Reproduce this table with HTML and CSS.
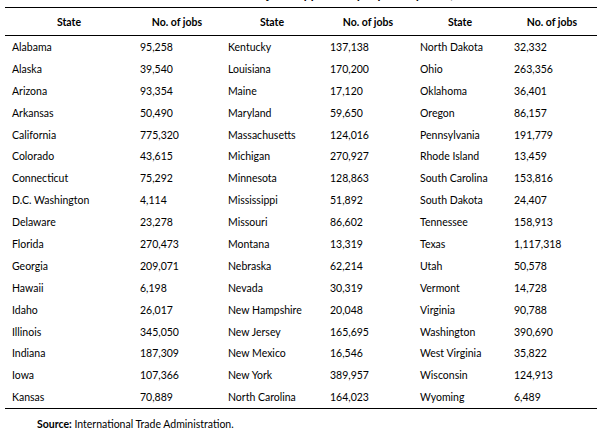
FILE: index.html
```html
<!DOCTYPE html>
<html lang="en">
<head>
<meta charset="utf-8">
<title>Jobs supported by exports by state</title>
<link rel="stylesheet" href="styles.css">
</head>
<body>
<div class="page">
  <p class="title">Table 2. Number of jobs supported by exports by state, 2015</p>
  <table class="jobs">
    <colgroup>
      <col class="c1"><col class="c2"><col class="c3"><col class="c4"><col class="c5"><col class="c6">
    </colgroup>
    <thead>
      <tr><th>State</th><th>No. of jobs</th><th>State</th><th>No. of jobs</th><th>State</th><th>No. of jobs</th></tr>
    </thead>
    <tbody>
      <tr><td>Alabama</td><td>95,258</td><td>Kentucky</td><td>137,138</td><td>North Dakota</td><td>32,332</td></tr>
      <tr><td>Alaska</td><td>39,540</td><td>Louisiana</td><td>170,200</td><td>Ohio</td><td>263,356</td></tr>
      <tr><td>Arizona</td><td>93,354</td><td>Maine</td><td>17,120</td><td>Oklahoma</td><td>36,401</td></tr>
      <tr><td>Arkansas</td><td>50,490</td><td>Maryland</td><td>59,650</td><td>Oregon</td><td>86,157</td></tr>
      <tr><td>California</td><td>775,320</td><td>Massachusetts</td><td>124,016</td><td>Pennsylvania</td><td>191,779</td></tr>
      <tr><td>Colorado</td><td>43,615</td><td>Michigan</td><td>270,927</td><td>Rhode Island</td><td>13,459</td></tr>
      <tr><td>Connecticut</td><td>75,292</td><td>Minnesota</td><td>128,863</td><td>South Carolina</td><td>153,816</td></tr>
      <tr><td>D.C. Washington</td><td>4,114</td><td>Mississippi</td><td>51,892</td><td>South Dakota</td><td>24,407</td></tr>
      <tr><td>Delaware</td><td>23,278</td><td>Missouri</td><td>86,602</td><td>Tennessee</td><td>158,913</td></tr>
      <tr><td>Florida</td><td>270,473</td><td>Montana</td><td>13,319</td><td>Texas</td><td>1,117,318</td></tr>
      <tr><td>Georgia</td><td>209,071</td><td>Nebraska</td><td>62,214</td><td>Utah</td><td>50,578</td></tr>
      <tr><td>Hawaii</td><td>6,198</td><td>Nevada</td><td>30,319</td><td>Vermont</td><td>14,728</td></tr>
      <tr><td>Idaho</td><td>26,017</td><td>New Hampshire</td><td>20,048</td><td>Virginia</td><td>90,788</td></tr>
      <tr><td>Illinois</td><td>345,050</td><td>New Jersey</td><td>165,695</td><td>Washington</td><td>390,690</td></tr>
      <tr><td>Indiana</td><td>187,309</td><td>New Mexico</td><td>16,546</td><td>West Virginia</td><td>35,822</td></tr>
      <tr><td>Iowa</td><td>107,366</td><td>New York</td><td>389,957</td><td>Wisconsin</td><td>124,913</td></tr>
      <tr><td>Kansas</td><td>70,889</td><td>North Carolina</td><td>164,023</td><td>Wyoming</td><td>6,489</td></tr>
    </tbody>
  </table>
  <p class="source"><b>Source:</b> International Trade Administration.</p>
</div>
</body>
</html>
```
FILE: styles.css
```css
html, body {
  margin: 0;
  padding: 0;
  background: #fff;
}
.page {
  font-family: Lato, "Open Sans", "Liberation Sans", sans-serif;
  font-size: 10.5px;
  color: #000;
  padding-left: 5px;
  overflow: hidden;
}
.title {
  margin: -12px 0 0 0;
  padding-left: 158px;
  font-size: 12px;
  font-weight: bold;
  line-height: 14px;
  height: 14px;
  white-space: nowrap;
}
.jobs {
  border-collapse: collapse;
  table-layout: fixed;
  width: 592px;
  margin-top: 5px;
  border-top: 1.5px solid #000;
  border-bottom: 1.5px solid #000;
}
.c1 { width: 128px; }
.c2 { width: 88px; }
.c3 { width: 102px; }
.c4 { width: 90px; }
.c5 { width: 94px; }
.c6 { width: 90px; }
.jobs th {
  height: 27px;
  padding: 0;
  font-weight: bold;
  text-align: center;
  border-bottom: 1.5px solid #000;
  white-space: nowrap;
}
.jobs td {
  height: 21.9px;
  padding: 0 0 0 7px;
  text-align: left;
  white-space: nowrap;
}
.source {
  margin: 8px 0 0 32px;
  line-height: 14px;
}
```
